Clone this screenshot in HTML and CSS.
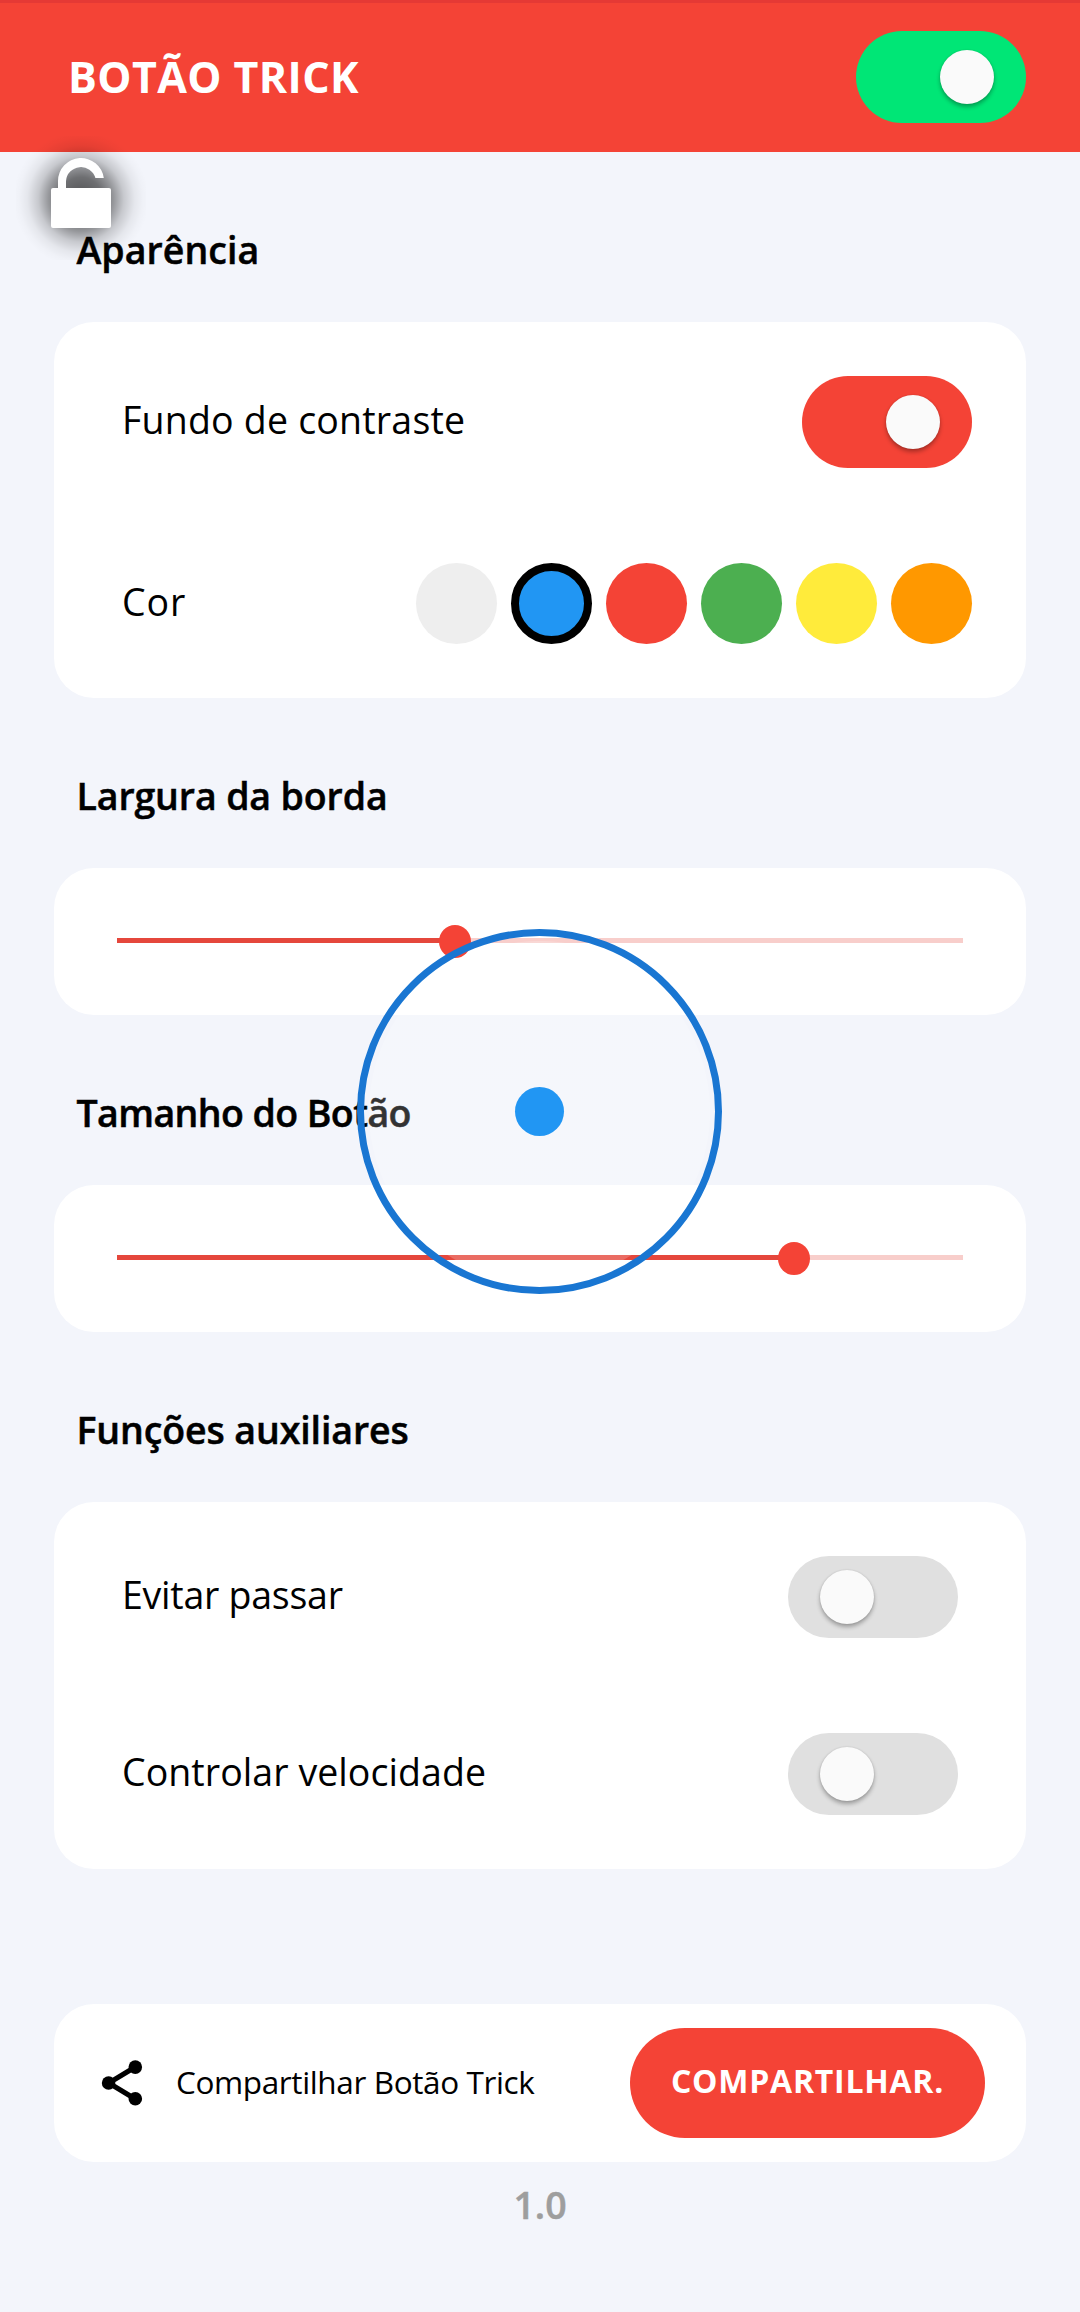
FILE: index.html
```html
<!DOCTYPE html>
<html lang="pt-BR">
<head>
  <meta charset="utf-8">
  <title>Botão Trick</title>
  <link rel="stylesheet" href="styles.css">
</head>
<body>
  <header class="app-bar">
    <h1 class="app-title">BOTÃO TRICK</h1>
    <div class="switch switch-green"><span class="knob"></span></div>
  </header>

  <main class="content">
    <h2 class="section-title">Aparência</h2>
    <section class="card card-rows">
      <div class="row">
        <span class="label">Fundo de contraste</span>
        <div class="switch switch-red"><span class="knob"></span></div>
      </div>
      <div class="row">
        <span class="label label-color">Cor</span>
        <div class="swatches">
          <span class="swatch grey"></span>
          <span class="swatch blue selected"></span>
          <span class="swatch red"></span>
          <span class="swatch green"></span>
          <span class="swatch yellow"></span>
          <span class="swatch orange"></span>
        </div>
      </div>
    </section>

    <h2 class="section-title title-border">Largura da borda</h2>
    <section class="card card-slider">
      <div class="slider"><div class="slider-fill" style="width: 40%"></div></div>
    </section>

    <h2 class="section-title title-size">Tamanho do Botão</h2>
    <section class="card card-slider">
      <div class="slider"><div class="slider-fill" style="width: 80%"></div></div>
    </section>

    <h2 class="section-title title-extras">Funções auxiliares</h2>
    <section class="card card-rows card-options">
      <div class="row">
        <span class="label label-skip">Evitar passar</span>
        <div class="switch switch-off"><span class="knob"></span></div>
      </div>
      <div class="row">
        <span class="label label-speed">Controlar velocidade</span>
        <div class="switch switch-off"><span class="knob"></span></div>
      </div>
    </section>

    <section class="card card-share">
      <svg class="share-icon" viewBox="0 0 54 54" width="54" height="54">
        <path d="M40.3 11 13.7 27 40.3 43" fill="none" stroke="#000" stroke-width="5"/>
        <circle cx="40.3" cy="11.1" r="6.8"/>
        <circle cx="13.6" cy="27" r="6.8"/>
        <circle cx="40.3" cy="42.8" r="6.8"/>
      </svg>
      <span class="share-label">Compartilhar Botão Trick</span>
      <button class="share-button" type="button">COMPARTILHAR.</button>
    </section>
    <p class="version">1.0</p>
  </main>

  <div class="lock">
    <svg viewBox="0 0 130 124" width="130" height="124">
      <path d="M42 54V45A23 23 0 0 1 87.8 42H79.4A15 15 0 0 0 50 45V54Z" fill="#fff"/>
      <rect x="35" y="52" width="60" height="40" rx="2" fill="#fff"/>
    </svg>
  </div>

  <div class="trick-button"><span class="trick-dot"></span></div>
</body>
</html>
```
FILE: styles.css
```css
* {
  box-sizing: border-box;
}

body {
  position: relative;
  margin: 0;
  width: 1080px;
  height: 2312px;
  overflow: hidden;
  background: #f3f5fb;
  color: #000;
  font-family: "Open Sans", "Noto Sans", sans-serif;
  font-size: 37.5px;
}

.app-bar {
  display: flex;
  align-items: center;
  justify-content: space-between;
  height: 152px;
  padding: 0 54px 1px 68px;
  border-top: 3px solid #e53935;
  background: #f44336;
}

.app-title {
  margin: 0;
  padding-bottom: 1px;
  color: #fff;
  font-size: 43px;
  font-weight: 700;
  line-height: 60px;
  letter-spacing: 0.4px;
  white-space: nowrap;
}

/* Switches */

.switch {
  display: flex;
  align-items: center;
  width: 170px;
  height: 92px;
  border-radius: 46px;
  padding: 0 32px;
}

.switch-green {
  justify-content: flex-end;
  background: #00e676;
}

.switch-red {
  justify-content: flex-end;
  background: #f44336;
}

.switch-off {
  height: 82px;
  border-radius: 41px;
  background: #e0e0e0;
}

.knob {
  width: 54px;
  height: 54px;
  border-radius: 50%;
  background: #fafafa;
  box-shadow: 0 3px 4px rgba(0, 0, 0, 0.3), 0 0 2px rgba(0, 0, 0, 0.12);
}

/* Sections */

.content {
  padding: 0 54px;
}

.section-title {
  margin: 0;
  padding: 67px 0 42px 22.5px;
  font-size: 37.5px;
  font-weight: 600;
  line-height: 61px;
  letter-spacing: 0.05px;
  white-space: nowrap;
  -webkit-text-stroke: 0.5px currentColor;
}

.title-border {
  letter-spacing: -0.12px;
}

.title-size {
  letter-spacing: -0.59px;
}

.title-extras {
  letter-spacing: -0.11px;
}

.card {
  border-radius: 40px;
  background: #fff;
}

.card-rows {
  display: flex;
  flex-direction: column;
  gap: 95px;
  padding: 54px 54px 54px 68px;
}

.card-options {
  padding-right: 68px;
}

.row {
  display: flex;
  align-items: center;
  justify-content: space-between;
}

.label {
  padding-bottom: 5px;
  line-height: 50px;
  letter-spacing: 0.2px;
  white-space: nowrap;
}

.label-color {
  padding-bottom: 3px;
  letter-spacing: 0.9px;
}

.label-skip {
  letter-spacing: -0.25px;
}

.label-speed {
  letter-spacing: 0.06px;
}

.swatches {
  display: flex;
  gap: 14px;
}

.swatch {
  width: 81px;
  height: 81px;
  border-radius: 50%;
}

.selected {
  border: 8px solid #000;
}

.grey { background-color: #eee; }
.blue { background-color: #2196f3; }
.red { background-color: #f44336; }
.green { background-color: #4caf50; }
.yellow { background-color: #ffeb3b; }
.orange { background-color: #ff9800; }

/* Sliders */

.card-slider {
  height: 147px;
  padding: 70px 63px 0;
}

.slider {
  height: 5px;
  background: #f8cecb;
}

.slider-fill {
  position: relative;
  height: 100%;
  background: #e5473c;
}

.slider-fill::after {
  content: "";
  position: absolute;
  top: -13px;
  right: -16px;
  width: 32px;
  height: 33px;
  border-radius: 50%;
  background: #f44336;
}

/* Share */

.card-share {
  display: flex;
  align-items: center;
  height: 158px;
  margin-top: 135px;
  padding: 0 41px;
}

.share-label {
  margin-left: 27px;
  padding-bottom: 2px;
  font-size: 31.5px;
  line-height: 44px;
  letter-spacing: -0.38px;
  white-space: nowrap;
}

.share-button {
  width: 355px;
  height: 110px;
  margin-left: auto;
  padding: 0 0 4px;
  border: 0;
  border-radius: 55px;
  background: #f44336;
  color: #fff;
  font: 700 32px/44px "Open Sans", "Noto Sans", sans-serif;
  letter-spacing: 0.75px;
  white-space: nowrap;
}

.version {
  margin: 18px 0 0;
  color: #9e9e9e;
  font-weight: 600;
  line-height: 50px;
  text-align: center;
  -webkit-text-stroke: 0.5px currentColor;
}

/* Floating elements */

.lock {
  position: absolute;
  left: 16px;
  top: 136px;
  width: 130px;
  height: 124px;
  background: radial-gradient(circle 68px at 65px 63px,
    rgba(0, 0, 0, 0.68) 0%,
    rgba(0, 0, 0, 0.55) 32%,
    rgba(0, 0, 0, 0.38) 48%,
    rgba(0, 0, 0, 0.18) 63%,
    rgba(0, 0, 0, 0.06) 79%,
    rgba(0, 0, 0, 0.015) 91%,
    rgba(0, 0, 0, 0) 100%);
}

.lock svg {
  display: block;
}

.trick-button {
  position: absolute;
  left: 357px;
  top: 929px;
  display: flex;
  align-items: center;
  justify-content: center;
  width: 365px;
  height: 365px;
  border: 7.5px solid #1976d2;
  border-radius: 50%;
  background: radial-gradient(circle, rgba(255, 255, 255, 0.2) 170px, transparent 171px);
}

.trick-dot {
  width: 49px;
  height: 49px;
  border-radius: 50%;
  background: #2196f3;
}
```
